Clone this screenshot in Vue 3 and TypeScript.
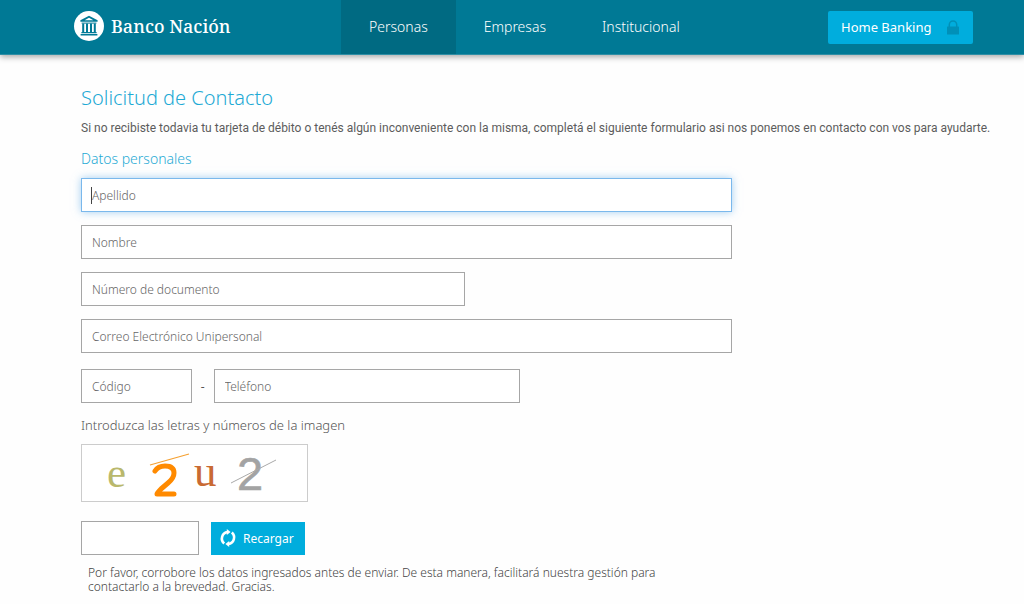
<script setup lang="ts">
import { onMounted, reactive, ref } from 'vue'

interface NavItem {
  label: string
  active: boolean
}

const navItems: NavItem[] = [
  { label: 'Personas', active: true },
  { label: 'Empresas', active: false },
  { label: 'Institucional', active: false },
]

const form = reactive({
  apellido: '',
  nombre: '',
  documento: '',
  correo: '',
  codigo: '',
  telefono: '',
  captcha: '',
})

const firstField = ref<HTMLInputElement | null>(null)

onMounted(() => firstField.value?.focus())
</script>

<template>
  <div class="page">
    <header class="topbar">
      <a class="brand" href="#">
        <svg class="brand-mark" viewBox="0 0 30 30" aria-hidden="true">
          <circle cx="15" cy="15" r="15" fill="#fff" />
          <g fill="#007a96">
            <path d="M15 4.8 23.6 9.3v1.5H6.4V9.3zM15 6.8 10.6 9.2h8.8z" fill-rule="evenodd" />
            <path d="M7.6 11.6h14.8v1H7.6z" />
            <path d="M8.2 12.5h2v8.6h-2zM12 12.5h2v8.6h-2zM16 12.5h2v8.6h-2zM19.8 12.5h2v8.6h-2z" />
            <path d="M7.4 21h15.2v1.2H7.4zM6.6 22.9h16.8v1.5H6.6z" />
          </g>
        </svg>
        <span class="brand-name">Banco Nación</span>
      </a>
      <nav class="nav">
        <a
          v-for="item in navItems"
          :key="item.label"
          class="nav-link"
          :class="{ active: item.active }"
          href="#"
        >{{ item.label }}</a>
      </nav>
      <button class="home-banking" type="button">
        <span>Home Banking</span>
        <svg class="lock" viewBox="0 0 12 15" aria-hidden="true">
          <path d="M2.3 7V4.6a3.7 3.7 0 0 1 7.4 0V7" fill="none" stroke="#0090b8" stroke-width="1.5" />
          <rect y="6.4" width="12" height="8.2" rx="0.6" fill="#0090b8" />
        </svg>
      </button>
    </header>

    <main class="content">
      <h1>Solicitud de Contacto</h1>
      <p class="intro">
        Si no recibiste todavia tu tarjeta de débito o tenés algún inconveniente con la misma, completá el siguiente formulario asi nos ponemos en contacto con vos para ayudarte.
      </p>
      <h2>Datos personales</h2>

      <form class="form" @submit.prevent>
        <div class="focus-wrap">
          <input ref="firstField" v-model="form.apellido" class="field first" type="text" placeholder="Apellido" aria-label="Apellido" />
          <span v-if="!form.apellido" class="caret" aria-hidden="true"></span>
        </div>
        <input v-model="form.nombre" class="field" type="text" placeholder="Nombre" aria-label="Nombre" />
        <input v-model="form.documento" class="field document" type="text" placeholder="Número de documento" aria-label="Número de documento" />
        <input v-model="form.correo" class="field" type="email" placeholder="Correo Electrónico Unipersonal" aria-label="Correo Electrónico Unipersonal" />
        <div class="phone">
          <input v-model="form.codigo" class="field code" type="text" placeholder="Código" aria-label="Código" />
          <span class="dash">-</span>
          <input v-model="form.telefono" class="field number" type="tel" placeholder="Teléfono" aria-label="Teléfono" />
        </div>

        <label class="captcha-label" for="captcha">Introduzca las letras y números de la imagen</label>
        <svg class="captcha" viewBox="0 0 225 56" aria-hidden="true">
          <text x="25" y="42" class="serif" font-size="43" fill="#b9b86c">e</text>
          <path d="M68 20 107 9" stroke="#f5a031" stroke-width="1.2" />
          <path d="M73 26q3-5 10-5 9 0 9 7 0 5-6 10l-7 6q-4 4-4 5h17" fill="none" stroke="#ff8a00" stroke-width="5" stroke-linecap="round" stroke-linejoin="round" />
          <text x="112" y="41" class="serif" font-size="45" fill="#c96a33">u</text>
          <text x="155" y="45" class="sans" font-size="47" fill="#a3a3a3" stroke="#a3a3a3" stroke-width="0.6">2</text>
          <path d="M149 38 194 15" stroke="#a9a9a9" stroke-width="1" />
        </svg>
        <div class="captcha-row">
          <input id="captcha" v-model="form.captcha" class="field answer" type="text" />
          <button class="reload" type="button">
            <svg class="reload-icon" viewBox="0 0 18 18" aria-hidden="true">
              <g fill="none" stroke="#fff" stroke-width="2.6">
                <path d="M5.2 14.4A6.5 6.5 0 0 1 8.6 3" />
                <path d="M12.8 3.6A6.5 6.5 0 0 1 9.4 15" />
              </g>
              <path d="M7.8 0v6L11.6 3zM10.2 12V18l-3.8-3z" fill="#fff" />
            </svg>
            <span>Recargar</span>
          </button>
        </div>
        <p class="note">
          Por favor, corrobore los datos ingresados antes de enviar. De esta manera, facilitará nuestra gestión para contactarlo a la brevedad. Gracias.
        </p>
      </form>
    </main>
  </div>
</template>

<style>
body {
  margin: 0;
  background: #fefefe;
}
</style>

<style scoped>
.page {
  font-family: "Noto Sans", "Open Sans", sans-serif;
  font-size: 12px;
  color: #555;
}

.topbar {
  display: flex;
  align-items: center;
  height: 54px;
  padding: 0 51px 0 74px;
  background: #007995;
  border-bottom: 1px solid #2e8ea5;
  box-shadow: 0 2px 6px rgba(0, 0, 0, 0.35);
}

.brand {
  display: flex;
  align-items: center;
  gap: 7px;
  width: 267px;
  height: 50px;
  padding-bottom: 2px;
  color: #fff;
  text-decoration: none;
}

.brand-mark {
  width: 30px;
  height: 30px;
}

.brand-name {
  font-family: "Noto Serif", "DejaVu Serif", serif;
  font-size: 18px;
  font-weight: 500;
}

.nav {
  display: flex;
  align-self: stretch;
}

.nav-link {
  display: flex;
  align-items: center;
  padding: 0 28px 2px;
  font-size: 14px;
  font-weight: 300;
  color: #fff;
  text-decoration: none;
}

.nav-link.active {
  background: #006a82;
}

.home-banking {
  display: flex;
  align-items: center;
  justify-content: space-between;
  width: 145px;
  height: 33px;
  margin-left: auto;
  padding: 0 14px 0 13px;
  border: 0;
  border-radius: 2px;
  background: #00addd;
  color: #fff;
  font: inherit;
  font-size: 13px;
}

.lock {
  width: 12px;
  height: 15px;
}

.content {
  padding: 29px 10px 8px 81px;
}

h1 {
  margin: 0;
  font-size: 20px;
  font-weight: 300;
  line-height: 28px;
  color: #1eaad5;
}

.intro {
  margin: 7px 0 12px;
  font-family: Roboto, "Noto Sans", sans-serif;
  line-height: 18px;
  color: #5c5c5c;
}

h2 {
  margin: 0 0 9px;
  font-size: 14px;
  font-weight: 300;
  line-height: 20px;
  color: #1eaad5;
}

.form {
  display: flex;
  flex-direction: column;
  align-items: flex-start;
  gap: 13px;
  max-width: 651px;
}

.field {
  box-sizing: border-box;
  width: 100%;
  height: 34px;
  padding: 0 10px;
  border: 1px solid #a6a6a6;
  border-radius: 0;
  outline: none;
  background: #fff;
  color: #555;
  font: inherit;
  font-weight: 300;
}

.field::placeholder {
  color: #666;
  opacity: 1;
}

.field.first {
  caret-color: transparent;
}

.field:focus {
  border-color: #7ab8ec;
  box-shadow: 0 0 8px rgba(102, 175, 233, 0.6);
}

.focus-wrap {
  position: relative;
  display: flex;
  width: 100%;
}

.caret {
  position: absolute;
  top: 9px;
  left: 10px;
  width: 1px;
  height: 17px;
  background: #444;
}

.document {
  width: 59%;
}

.phone {
  display: flex;
  align-items: center;
  width: 100%;
  margin-top: 3px;
}

.code {
  width: 17%;
}

.dash {
  width: 22px;
  text-align: center;
}

.number {
  width: 47%;
}

.captcha-label {
  margin-bottom: -3px;
  font-size: 13px;
  font-weight: 300;
  line-height: 18px;
}

.captcha {
  width: 225px;
  height: 56px;
  border: 1px solid #ccc;
  background: #fff;
}

.serif {
  font-family: "Liberation Serif", serif;
}

.sans {
  font-family: "Liberation Sans", sans-serif;
}

.captcha-row {
  display: flex;
  align-items: center;
  gap: 12px;
  margin-top: 6px;
}

.answer {
  width: 118px;
}

.reload {
  display: flex;
  align-items: center;
  gap: 6px;
  height: 33px;
  padding: 0 11px 0 8px;
  border: 0;
  background: #00addd;
  color: #fff;
  font: inherit;
}

.reload-icon {
  width: 18px;
  height: 18px;
}

.note {
  max-width: 600px;
  margin: -2px 0 0 7px;
  color: #444;
  font-weight: 300;
  line-height: 14px;
}
</style>
